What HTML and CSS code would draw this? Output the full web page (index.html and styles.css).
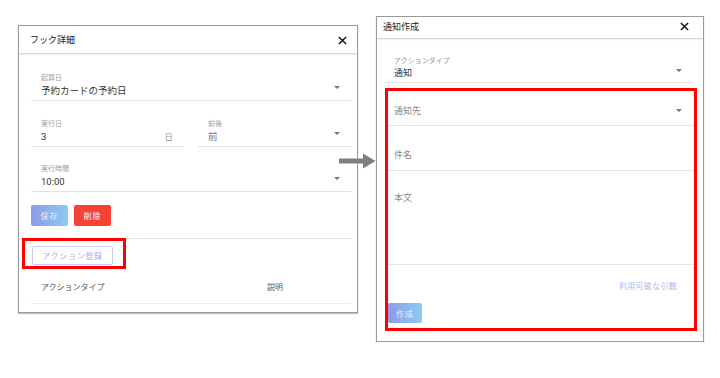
FILE: index.html
```html
<!DOCTYPE html>
<html lang="ja">
<head>
  <meta charset="UTF-8">
  <title>フック詳細 / 通知作成</title>
  <link rel="stylesheet" href="styles.css">
</head>
<body>

  <div class="stage">

    <div class="dialog hook">
      <div class="dialog-head">
        <span class="dialog-title">フック詳細</span>
        <svg class="close" viewBox="0 0 10 10"><path d="M1 1L9 9M9 1L1 9"/></svg>
      </div>
      <div class="dialog-body">
        <div class="field select">
          <div class="field-label">起算日</div>
          <div class="field-value">予約カードの予約日</div>
          <span class="caret"></span>
        </div>

        <div class="field-row">
          <div class="field">
            <div class="field-label">実行日</div>
            <div class="field-value">3</div>
            <span class="suffix">日</span>
          </div>
          <div class="field select">
            <div class="field-label">前後</div>
            <div class="field-value muted">前</div>
            <span class="caret"></span>
          </div>
        </div>

        <div class="field select third">
          <div class="field-label">実行時間</div>
          <div class="field-value">10:00</div>
          <span class="caret"></span>
        </div>

        <div class="actions">
          <button class="btn btn-save">保存</button>
          <button class="btn btn-delete">削除</button>
        </div>

        <div class="section">
          <div class="mark mark-small">
            <button class="btn-outline">アクション登録</button>
          </div>
          <div class="table-head">
            <span>アクションタイプ</span>
            <span>説明</span>
          </div>
        </div>
      </div>
    </div>

    <div class="dialog notice">
      <div class="dialog-head">
        <span class="dialog-title">通知作成</span>
        <svg class="close" viewBox="0 0 10 10"><path d="M1 1L9 9M9 1L1 9"/></svg>
      </div>
      <div class="dialog-body">
        <div class="field select">
          <div class="field-label">アクションタイプ</div>
          <div class="field-value">通知</div>
          <span class="caret"></span>
        </div>

        <div class="mark mark-large">
          <div class="input select to">
            <span class="placeholder">通知先</span>
            <span class="caret"></span>
          </div>
          <div class="input subject">
            <span class="placeholder">件名</span>
          </div>
          <div class="input body-text">
            <span class="placeholder">本文</span>
          </div>
          <div class="args">利用可能な引数</div>
          <button class="btn btn-create">作成</button>
        </div>
      </div>
    </div>

    <svg class="arrow" viewBox="0 0 37 16">
      <path d="M0 5.5H24V0.5L36.5 8L24 15.5V10.5H0Z"/>
    </svg>
  </div>

</body>
</html>
```

FILE: styles.css
```css
body {
  margin: 0;
  background: #fff;
  font-family: Roboto, "Noto Sans CJK JP", sans-serif;
  color: #333;
}

.stage {
  position: relative;
  display: flex;
  align-items: flex-start;
  gap: 18px;
  padding-left: 18px;
}

.dialog {
  background: #fff;
  border: 1px solid #9a9a9a;
  box-shadow: 0 1px 1px rgba(0,0,0,0.25);
  box-sizing: border-box;
}

.hook {
  width: 340px;
  margin-top: 25px;
}

.notice {
  width: 328px;
  margin-top: 16px;
}

.dialog-head {
  display: flex;
  align-items: center;
  justify-content: space-between;
  border-bottom: 1px solid #d6d6d6;
  box-shadow: 0 1px 1px rgba(0,0,0,0.06);
}

.hook .dialog-head {
  height: 26px;
  padding: 1px 10px 0 11px;
}

.notice .dialog-head {
  height: 19px;
  padding: 0 14px 2px 6px;
}

.dialog-title {
  font-size: 9px;
  line-height: 12px;
  color: #222;
}

.close {
  width: 9px;
  height: 9px;
  stroke: #111;
  stroke-width: 1.6;
  fill: none;
}

.hook .dialog-body {
  padding: 19px 6px 8px 12px;
}

.notice .dialog-body {
  padding: 17px 10px 10px 8px;
}

/* text fields */
.field {
  position: relative;
  padding: 0 0 2px 10px;
  border-bottom: 1px solid #e4e4e4;
}

.notice .field {
  padding-left: 9px;
}

.field-label {
  font-size: 7px;
  line-height: 10px;
  color: #9a9a9a;
}

.field-value {
  font-size: 9.5px;
  line-height: 14px;
  margin-top: 1px;
  color: #333;
}

.notice .field-value {
  font-size: 9px;
  margin-top: 0;
}

.field-value.muted {
  color: #777;
}

.suffix {
  position: absolute;
  right: 11px;
  bottom: 4px;
  font-size: 8.5px;
  color: #999;
}

.caret {
  position: absolute;
  right: 11px;
  top: 13px;
  width: 0;
  height: 0;
  border-left: 3px solid transparent;
  border-right: 3px solid transparent;
  border-top: 3px solid #777;
}

.field-row {
  display: grid;
  grid-template-columns: 153px 1fr;
  gap: 14px;
  margin-top: 18px;
}

.third {
  margin-top: 17px;
}

/* buttons */
.actions {
  display: flex;
  gap: 6px;
  margin-top: 13px;
}

.btn {
  border: none;
  border-radius: 2px;
  font-family: inherit;
  font-size: 8px;
  letter-spacing: 1px;
  color: #fff;
  padding: 0;
  cursor: pointer;
}

.btn-save {
  width: 37px;
  height: 21px;
  background: linear-gradient(to right, #8d9be6, #8ecbf1);
  color: #e8ecff;
}

.btn-delete {
  width: 37px;
  height: 21px;
  background: #f44336;
}

.section {
  margin-top: 12px;
  border-top: 1px solid #e2e2e2;
}

/* red annotation frames */
.mark {
  border: 3px solid #ff0000;
  box-sizing: border-box;
}

.mark-small {
  width: 104px;
  height: 31px;
  margin: -1px 0 0 -9px;
  padding: 5px 0 0 7px;
}

.btn-outline {
  display: block;
  width: 81px;
  height: 19px;
  border: 1px solid #c9ccf4;
  border-radius: 2px;
  background: #fff;
  font-family: inherit;
  font-size: 8px;
  letter-spacing: 0.7px;
  color: #aab0f0;
  padding: 0;
}

.table-head {
  display: grid;
  grid-template-columns: 226px 1fr;
  align-items: center;
  height: 34px;
  padding-left: 10px;
  border-bottom: 1px solid #ececec;
  font-size: 8px;
  color: #555;
}

.mark-large {
  margin: 5px -4px 0 0;
  padding-bottom: 5px;
}

.input {
  position: relative;
  padding-left: 6px;
  border-bottom: 1px solid #e6e6e6;
}

.placeholder {
  display: block;
  font-size: 9px;
  line-height: 14px;
  color: #8a8a8a;
}

.input .caret {
  top: 18px;
  right: 12px;
}

.to {
  padding-top: 13px;
  padding-bottom: 7px;
}

.subject {
  padding-top: 22px;
  padding-bottom: 8px;
}

.body-text {
  padding-top: 20px;
  padding-bottom: 59px;
}

.args {
  text-align: right;
  margin: 16px 17px 0 0;
  font-size: 8px;
  line-height: 12px;
  letter-spacing: 0.3px;
  color: #b2b5ee;
}

.btn-create {
  display: block;
  width: 34px;
  height: 20px;
  margin-top: 10px;
  background: linear-gradient(to right, #8d9be6, #8ecbf1);
  color: #e8ecff;
}

.arrow {
  position: absolute;
  left: 339px;
  top: 153px;
  width: 37px;
  height: 16px;
  fill: #7f7f7f;
}
```
